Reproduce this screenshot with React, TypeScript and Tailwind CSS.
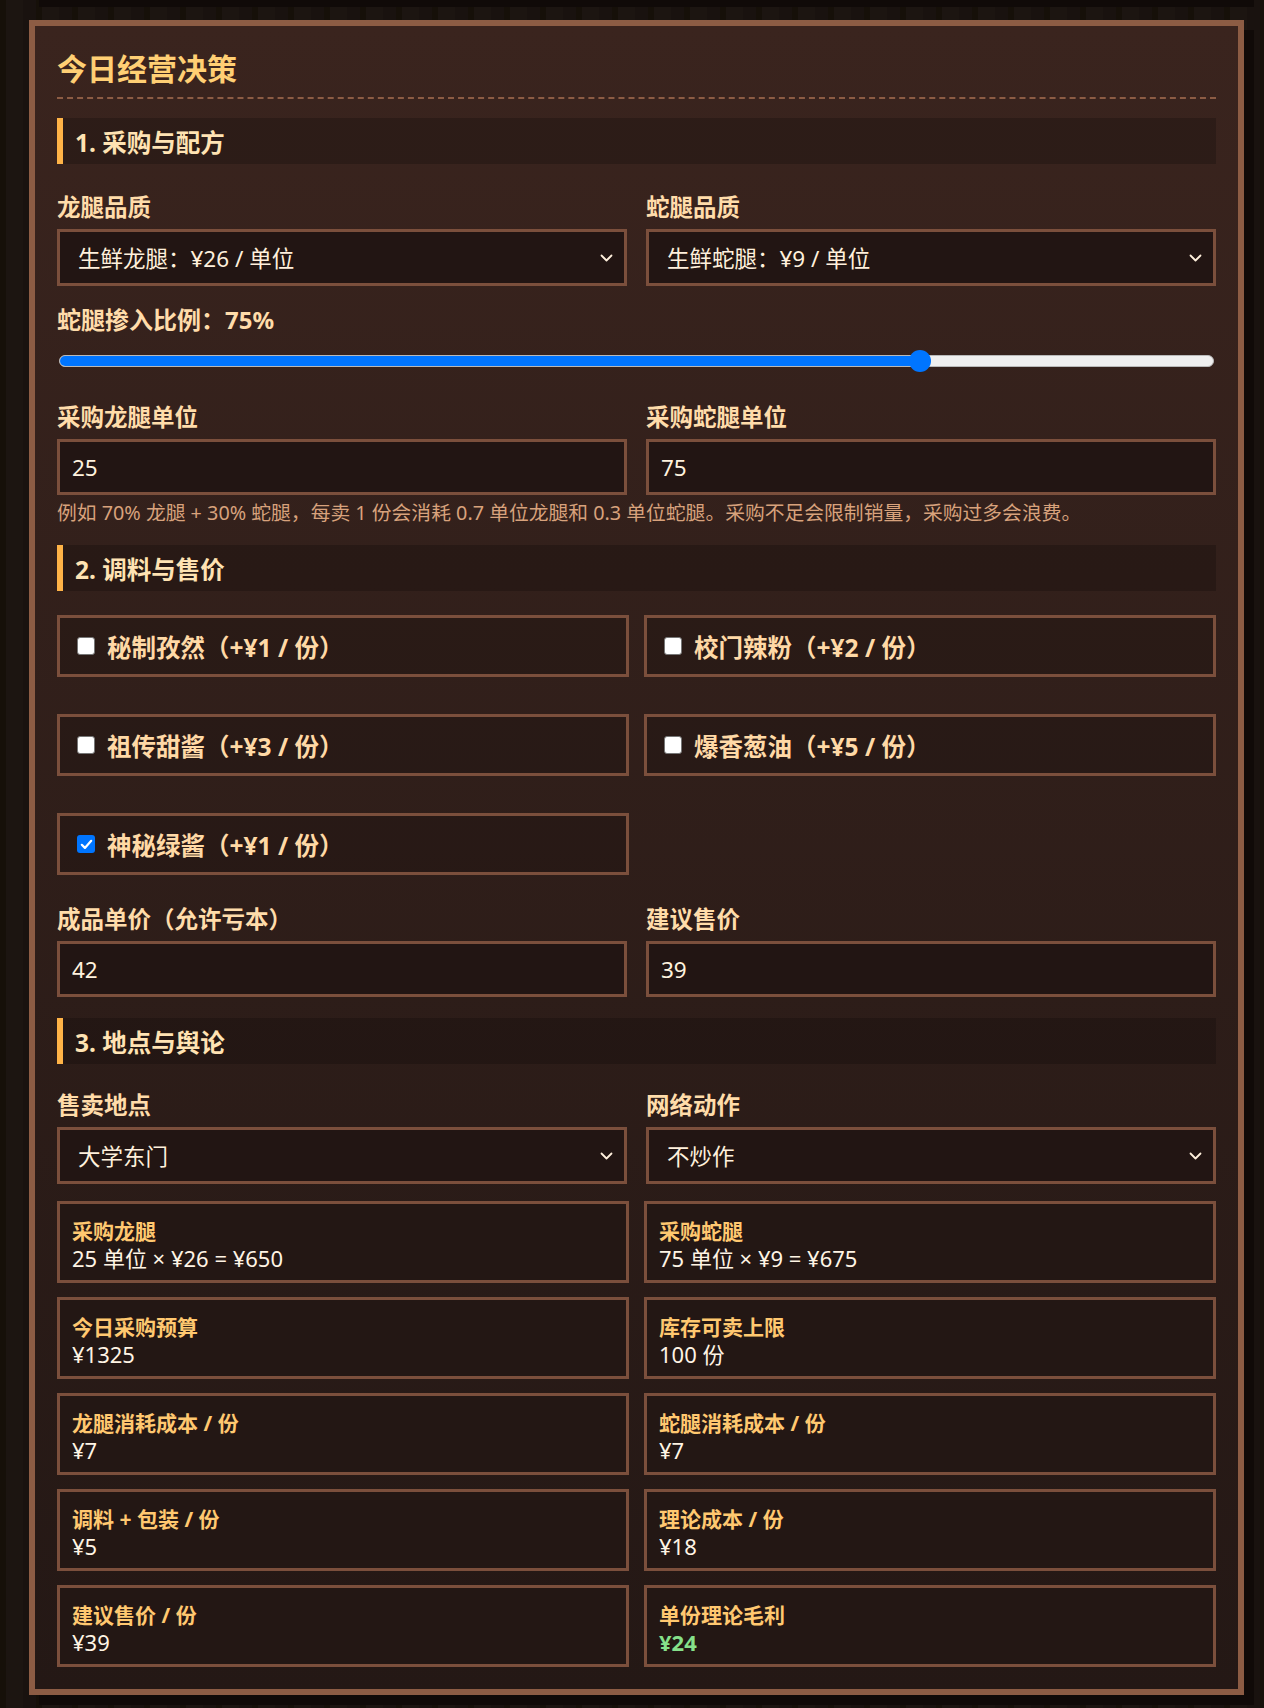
import React, { useState } from "react";

const spices = [
  { name: "秘制孜然", price: 1 },
  { name: "校门辣粉", price: 2 },
  { name: "祖传甜酱", price: 3 },
  { name: "爆香葱油", price: 5 },
  { name: "神秘绿酱", price: 1 },
];

const stats = [
  { label: "采购龙腿", value: "25 单位 × ¥26 = ¥650" },
  { label: "采购蛇腿", value: "75 单位 × ¥9 = ¥675" },
  { label: "今日采购预算", value: "¥1325" },
  { label: "库存可卖上限", value: "100 份" },
  { label: "龙腿消耗成本 / 份", value: "¥7" },
  { label: "蛇腿消耗成本 / 份", value: "¥7" },
  { label: "调料 + 包装 / 份", value: "¥5" },
  { label: "理论成本 / 份", value: "¥18" },
  { label: "建议售价 / 份", value: "¥39" },
  { label: "单份理论毛利", value: "¥24", good: true },
];

const SectionHeader = ({ title, className = "" }: { title: string; className?: string }) => (
  <div className={`flex h-[46px] items-center border-l-[6px] border-[#ffb347] bg-black/20 pl-[12px] pt-[4px] ${className}`}>
    <h3 className="text-[24.5px] font-bold leading-[30px] text-[#ffe3b3]">{title}</h3>
  </div>
);

const FieldLabel = ({ children }: { children: React.ReactNode }) => (
  <div className="mb-[9px] h-[30px] pt-[2px] text-[23.5px] font-bold leading-[30px] text-[#ffdcaa]">{children}</div>
);

const Chevron = () => (
  <svg width="13" height="8" viewBox="0 0 13 8" className="shrink-0">
    <path d="M1.5 1.5 L6.5 6.5 L11.5 1.5" fill="none" stroke="#fff0dc" strokeWidth="1.8" strokeLinecap="round" strokeLinejoin="round" />
  </svg>
);

const FakeSelect = ({ value }: { value: string }) => (
  <div className="flex h-[57px] items-center justify-between border-[3px] border-[#7b4f3c] bg-[#221513] pl-[18px] pr-[11px]">
    <span className="pt-[2px] text-[22.5px] leading-[30px] text-[#fff0dc]">{value}</span>
    <Chevron />
  </div>
);

const NumberBox = ({ value }: { value: string }) => (
  <div className="flex h-[56px] items-center border-[3px] border-[#7b4f3c] bg-[#221513] pl-[12px]">
    <span className="pt-[2px] text-[22.5px] leading-[30px] text-[#fff2de]">{value}</span>
  </div>
);

const Check = ({ on }: { on: boolean }) =>
  on ? (
    <span className="flex h-[18px] w-[18px] shrink-0 items-center justify-center rounded-[3px] bg-[#0075ff]">
      <svg width="13" height="11" viewBox="0 0 13 11">
        <path d="M1.8 5.8 L4.9 8.9 L11.2 1.8" fill="none" stroke="#fff" strokeWidth="2.2" strokeLinecap="round" strokeLinejoin="round" />
      </svg>
    </span>
  ) : (
    <span className="h-[18px] w-[18px] shrink-0 rounded-[3px] border border-[#767676] bg-white" />
  );

export default function App() {
  const [checked, setChecked] = useState([false, false, false, false, true]);
  const ratio = 75;

  return (
    <div className="min-h-[1708px] overflow-hidden bg-[#1a1310] bg-[repeating-linear-gradient(90deg,#161009_0px,#161009_6px,#1c1511_6px,#1c1511_23px,#19120f_23px,#19120f_36px)] font-['Noto_Sans','Noto_Sans_CJK_SC',sans-serif]">
      <div className="ml-[39px] h-[7px] w-[1215px] bg-[#100a08]" />
      <div className="ml-[29px] mt-[13px] w-[1215px] border-[6px] border-[#8c5c44] bg-linear-to-b from-[#3a241e] to-[#241815] px-[22px] pb-[22px] pt-[24px] shadow-[10px_10px_0_#100a08]">
        <h2 className="h-[49px] border-b-2 border-dashed border-[#8c5c44] pt-[1px] text-[30px] font-bold leading-[36px] text-[#ffcf74]">
          今日经营决策
        </h2>

        <SectionHeader title="1. 采购与配方" className="mt-[19px]" />

        <div className="mt-[26px] grid grid-cols-2 gap-x-[19px]">
          <div>
            <FieldLabel>龙腿品质</FieldLabel>
            <FakeSelect value="生鲜龙腿：¥26 / 单位" />
          </div>
          <div>
            <FieldLabel>蛇腿品质</FieldLabel>
            <FakeSelect value="生鲜蛇腿：¥9 / 单位" />
          </div>
        </div>

        <div className="mt-[17px] h-[30px] pt-[2px] text-[24px] font-bold leading-[30px] text-[#ffdcaa]">蛇腿掺入比例：{ratio}%</div>
        <div className="relative mx-[2px] mt-[17px] flex h-[22px] items-center">
          <div className="flex h-[12px] w-full overflow-hidden rounded-full border border-[#b9b9b9] bg-[#efefef]">
            <div className="h-full bg-[#0075ff]" style={{ width: `${ratio}%` }} />
          </div>
          <div
            className="absolute top-0 h-[22px] w-[22px] -translate-x-1/2 rounded-full bg-[#0075ff]"
            style={{ left: `calc(11px + (100% - 22px) * ${ratio / 100})` }}
          />
        </div>

        <div className="mt-[28px] grid grid-cols-2 gap-x-[19px]">
          <div>
            <FieldLabel>采购龙腿单位</FieldLabel>
            <NumberBox value="25" />
          </div>
          <div>
            <FieldLabel>采购蛇腿单位</FieldLabel>
            <NumberBox value="75" />
          </div>
        </div>
        <p className="mt-[5px] text-[19.8px] leading-[26px] text-[#d8a27c]">
          例如 70% 龙腿 + 30% 蛇腿，每卖 1 份会消耗 0.7 单位龙腿和 0.3 单位蛇腿。采购不足会限制销量，采购过多会浪费。
        </p>

        <SectionHeader title="2. 调料与售价" className="mt-[19px]" />

        <div className="mt-[24px] grid grid-cols-2 gap-x-[15px] gap-y-[37px]">
          {spices.map((s, i) => (
            <label
              key={s.name}
              onClick={() => setChecked((c) => c.map((v, j) => (j === i ? !v : v)))}
              className="flex h-[62px] cursor-pointer items-center gap-[12px] border-[3px] border-[#7b4f3c] bg-black/15 pl-[17px]"
            >
              <Check on={checked[i]} />
              <span className="pt-[4px] text-[24.5px] font-bold leading-[30px] text-[#ffd9a6]">
                {s.name}（+¥{s.price} / 份）
              </span>
            </label>
          ))}
        </div>

        <div className="mt-[27px] grid grid-cols-2 gap-x-[19px]">
          <div>
            <FieldLabel>成品单价（允许亏本）</FieldLabel>
            <NumberBox value="42" />
          </div>
          <div>
            <FieldLabel>建议售价</FieldLabel>
            <NumberBox value="39" />
          </div>
        </div>

        <SectionHeader title="3. 地点与舆论" className="mt-[21px]" />

        <div className="mt-[24px] grid grid-cols-2 gap-x-[19px]">
          <div>
            <FieldLabel>售卖地点</FieldLabel>
            <FakeSelect value="大学东门" />
          </div>
          <div>
            <FieldLabel>网络动作</FieldLabel>
            <FakeSelect value="不炒作" />
          </div>
        </div>

        <div className="mt-[17px] grid grid-cols-2 gap-x-[15px] gap-y-[14px]">
          {stats.map((s) => (
            <div key={s.label} className="flex h-[82px] flex-col justify-center border-[3px] border-[#7b4f3c] bg-[#231714] pl-[12px] pt-[6px]">
              <div className="text-[21px] font-bold leading-[27px] text-[#ffc870]">{s.label}</div>
              <div className={`text-[22px] leading-[27px] ${s.good ? "font-bold text-[#86e08a]" : "text-[#fff4e4]"}`}>{s.value}</div>
            </div>
          ))}
        </div>
      </div>
    </div>
  );
}
